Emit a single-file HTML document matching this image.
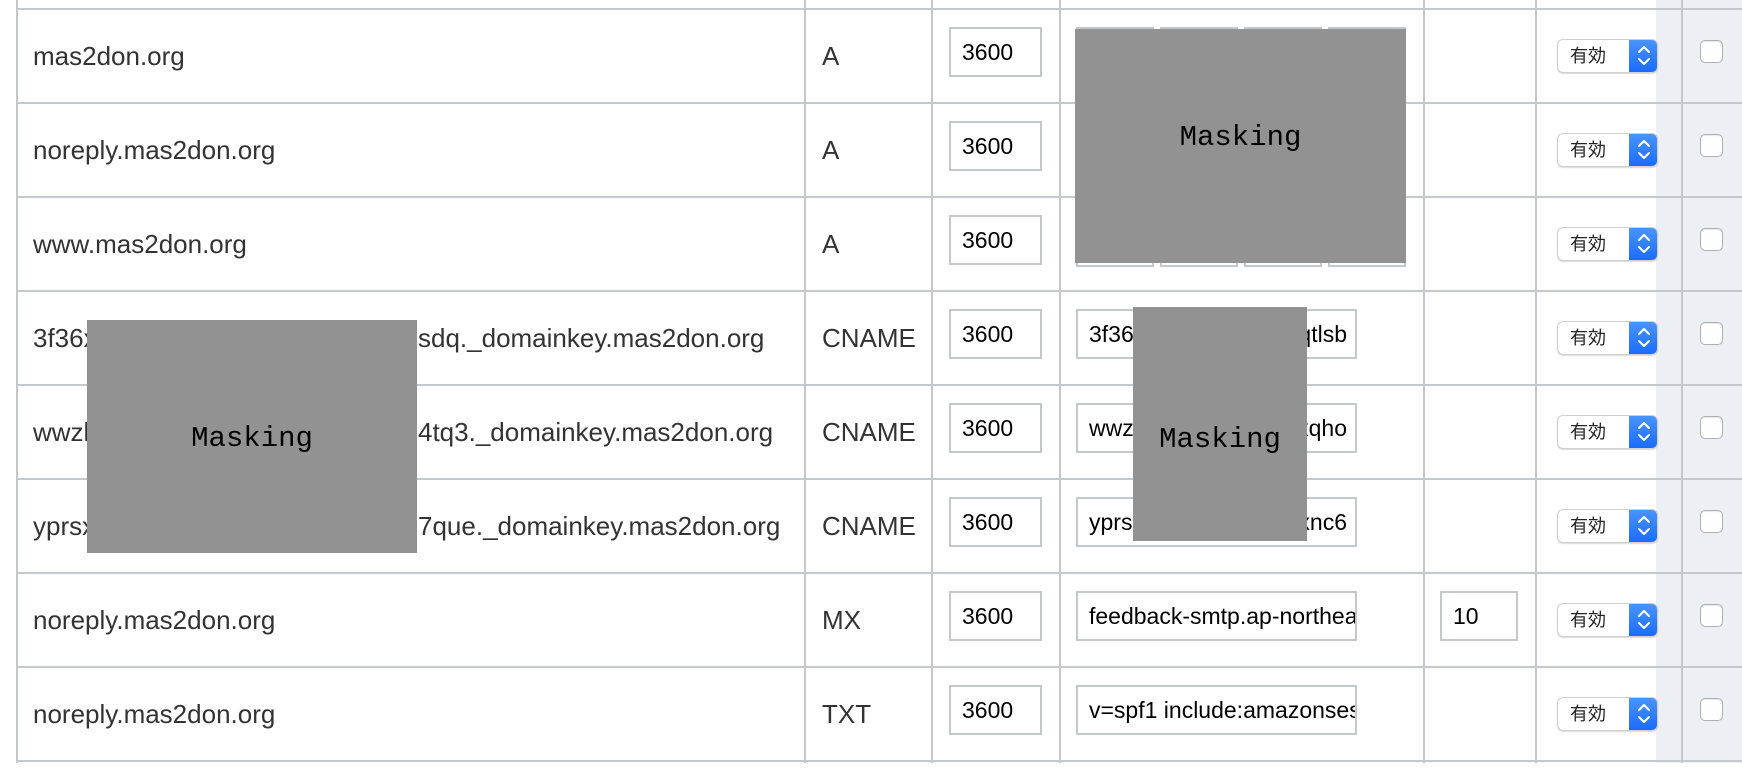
<!DOCTYPE html>
<html><head><meta charset="utf-8"><style>
body{margin:0;width:1742px;height:770px;overflow:hidden;background:#fff;position:relative;font-family:"Liberation Sans","Noto Sans CJK JP",sans-serif}
div{position:absolute;box-sizing:border-box}
.h{left:16px;right:0;height:2px;background:#c4c7cc}
.v{top:0;height:763px;width:2px;background:#c4c7cc}
.t{font-size:26px;color:#333;line-height:30px;white-space:nowrap;overflow:hidden}
.in{border:2px solid #c4c7cc;background:#fff;font-size:23px;color:#000;line-height:46px;padding-left:11px;height:50px;overflow:hidden;white-space:nowrap}
.sel{width:101px;height:34px;border-radius:6px;border:1px solid #d0d0d0;background:#fff;box-shadow:0 1px 1px rgba(0,0,0,.15);overflow:hidden}
.sel span{position:absolute;left:12px;top:4px;font-size:18px;color:#222;line-height:24px}
.sel b{position:absolute;right:0;top:0;width:28px;height:100%;background:linear-gradient(#4a94ff,#1a6cff)}
.cb{width:23px;height:23px;border:1px solid #b0b0b0;border-radius:5px;background:#fff;box-shadow:inset 0 1px 1px rgba(0,0,0,.1)}
.mask{background:#929292;color:#000;font-family:"Liberation Mono",monospace;font-size:29px;display:flex;justify-content:center}
</style></head><body>
<div style="left:1656px;top:0;width:86px;height:763px;background:#eceff4"></div>
<div class="v" style="left:16px"></div>
<div class="v" style="left:804px"></div><div class="v" style="left:931px"></div><div class="v" style="left:1059px"></div><div class="v" style="left:1423px"></div><div class="v" style="left:1535px"></div><div class="v" style="left:1681px"></div>
<div class="h" style="top:8px"></div><div class="h" style="top:102px"></div><div class="h" style="top:196px"></div><div class="h" style="top:290px"></div><div class="h" style="top:384px"></div><div class="h" style="top:478px"></div><div class="h" style="top:572px"></div><div class="h" style="top:666px"></div><div class="h" style="top:760px"></div>

<div class="t" style="left:33px;top:41px">mas2don.org</div>
<div class="t" style="left:33px;top:135px">noreply.mas2don.org</div>
<div class="t" style="left:33px;top:229px">www.mas2don.org</div>
<div class="t" style="left:33px;top:323px;width:54px">3f36xxxxx</div>
<div class="t" style="left:33px;top:417px;width:54px">wwzlxxxxx</div>
<div class="t" style="left:33px;top:511px;width:54px">yprsxxxxx</div>
<div class="t" style="left:33px;top:605px">noreply.mas2don.org</div>
<div class="t" style="left:33px;top:699px">noreply.mas2don.org</div>
<div class="t" style="left:418px;top:323px">sdq._domainkey.mas2don.org</div>
<div class="t" style="left:418px;top:417px">4tq3._domainkey.mas2don.org</div>
<div class="t" style="left:418px;top:511px">7que._domainkey.mas2don.org</div>

<div class="t" style="left:822px;top:41px">A</div>
<div class="t" style="left:822px;top:135px">A</div>
<div class="t" style="left:822px;top:229px">A</div>
<div class="t" style="left:822px;top:323px">CNAME</div>
<div class="t" style="left:822px;top:417px">CNAME</div>
<div class="t" style="left:822px;top:511px">CNAME</div>
<div class="t" style="left:822px;top:605px">MX</div>
<div class="t" style="left:822px;top:699px">TXT</div>

<div class="in" style="left:949px;top:27px;width:93px">3600</div>
<div class="in" style="left:949px;top:121px;width:93px">3600</div>
<div class="in" style="left:949px;top:215px;width:93px">3600</div>
<div class="in" style="left:949px;top:309px;width:93px">3600</div>
<div class="in" style="left:949px;top:403px;width:93px">3600</div>
<div class="in" style="left:949px;top:497px;width:93px">3600</div>
<div class="in" style="left:949px;top:591px;width:93px">3600</div>
<div class="in" style="left:949px;top:685px;width:93px">3600</div>

<div class="in" style="left:1076px;top:27px;width:78px;height:240px"></div>
<div class="in" style="left:1160px;top:27px;width:78px;height:240px"></div>
<div class="in" style="left:1244px;top:27px;width:78px;height:240px"></div>
<div class="in" style="left:1328px;top:27px;width:78px;height:240px"></div>
<div class="in" style="left:1076px;top:309px;width:281px;text-align:right;padding-right:8px">3f36xxxxxxqtlsb</div>
<div class="in" style="left:1076px;top:403px;width:281px;text-align:right;padding-right:8px">wwzxxxxxxqho</div>
<div class="in" style="left:1076px;top:497px;width:281px;text-align:right;padding-right:8px">yprsxxxxxxnc6</div>
<div class="in" style="left:1076px;top:309px;width:60px;border-right:0">3f36</div>
<div class="in" style="left:1076px;top:403px;width:60px;border-right:0">wwz</div>
<div class="in" style="left:1076px;top:497px;width:60px;border-right:0">yprs</div>
<div class="in" style="left:1076px;top:591px;width:281px">feedback-smtp.ap-northeast</div>
<div class="in" style="left:1076px;top:685px;width:281px">v=spf1 include:amazonses</div>
<div class="in" style="left:1440px;top:591px;width:78px">10</div>

<div class="mask" style="left:1075px;top:29px;width:331px;height:234px;padding-top:92px">Masking</div>
<div class="mask" style="left:87px;top:320px;width:330px;height:233px;padding-top:102px">Masking</div>
<div class="mask" style="left:1133px;top:307px;width:174px;height:234px;padding-top:116px">Masking</div>

<div class="sel" style="left:1557px;top:39px"><span>有効</span><b></b></div>
<div class="sel" style="left:1557px;top:133px"><span>有効</span><b></b></div>
<div class="sel" style="left:1557px;top:227px"><span>有効</span><b></b></div>
<div class="sel" style="left:1557px;top:321px"><span>有効</span><b></b></div>
<div class="sel" style="left:1557px;top:415px"><span>有効</span><b></b></div>
<div class="sel" style="left:1557px;top:509px"><span>有効</span><b></b></div>
<div class="sel" style="left:1557px;top:603px"><span>有効</span><b></b></div>
<div class="sel" style="left:1557px;top:697px"><span>有効</span><b></b></div>
<svg style="position:absolute;left:0;top:0" width="1742" height="770">
<g fill="none" stroke="#fff" stroke-width="2" stroke-linecap="round" stroke-linejoin="round">
<path id="ar" d="M1639 52l5-5 5 5M1639 59l5 5 5-5"/>
<use href="#ar" y="94"/><use href="#ar" y="188"/><use href="#ar" y="282"/><use href="#ar" y="376"/><use href="#ar" y="470"/><use href="#ar" y="564"/><use href="#ar" y="658"/>
</g></svg>
<div class="cb" style="left:1700px;top:40px"></div>
<div class="cb" style="left:1700px;top:134px"></div>
<div class="cb" style="left:1700px;top:228px"></div>
<div class="cb" style="left:1700px;top:322px"></div>
<div class="cb" style="left:1700px;top:416px"></div>
<div class="cb" style="left:1700px;top:510px"></div>
<div class="cb" style="left:1700px;top:604px"></div>
<div class="cb" style="left:1700px;top:698px"></div>
</body></html>
